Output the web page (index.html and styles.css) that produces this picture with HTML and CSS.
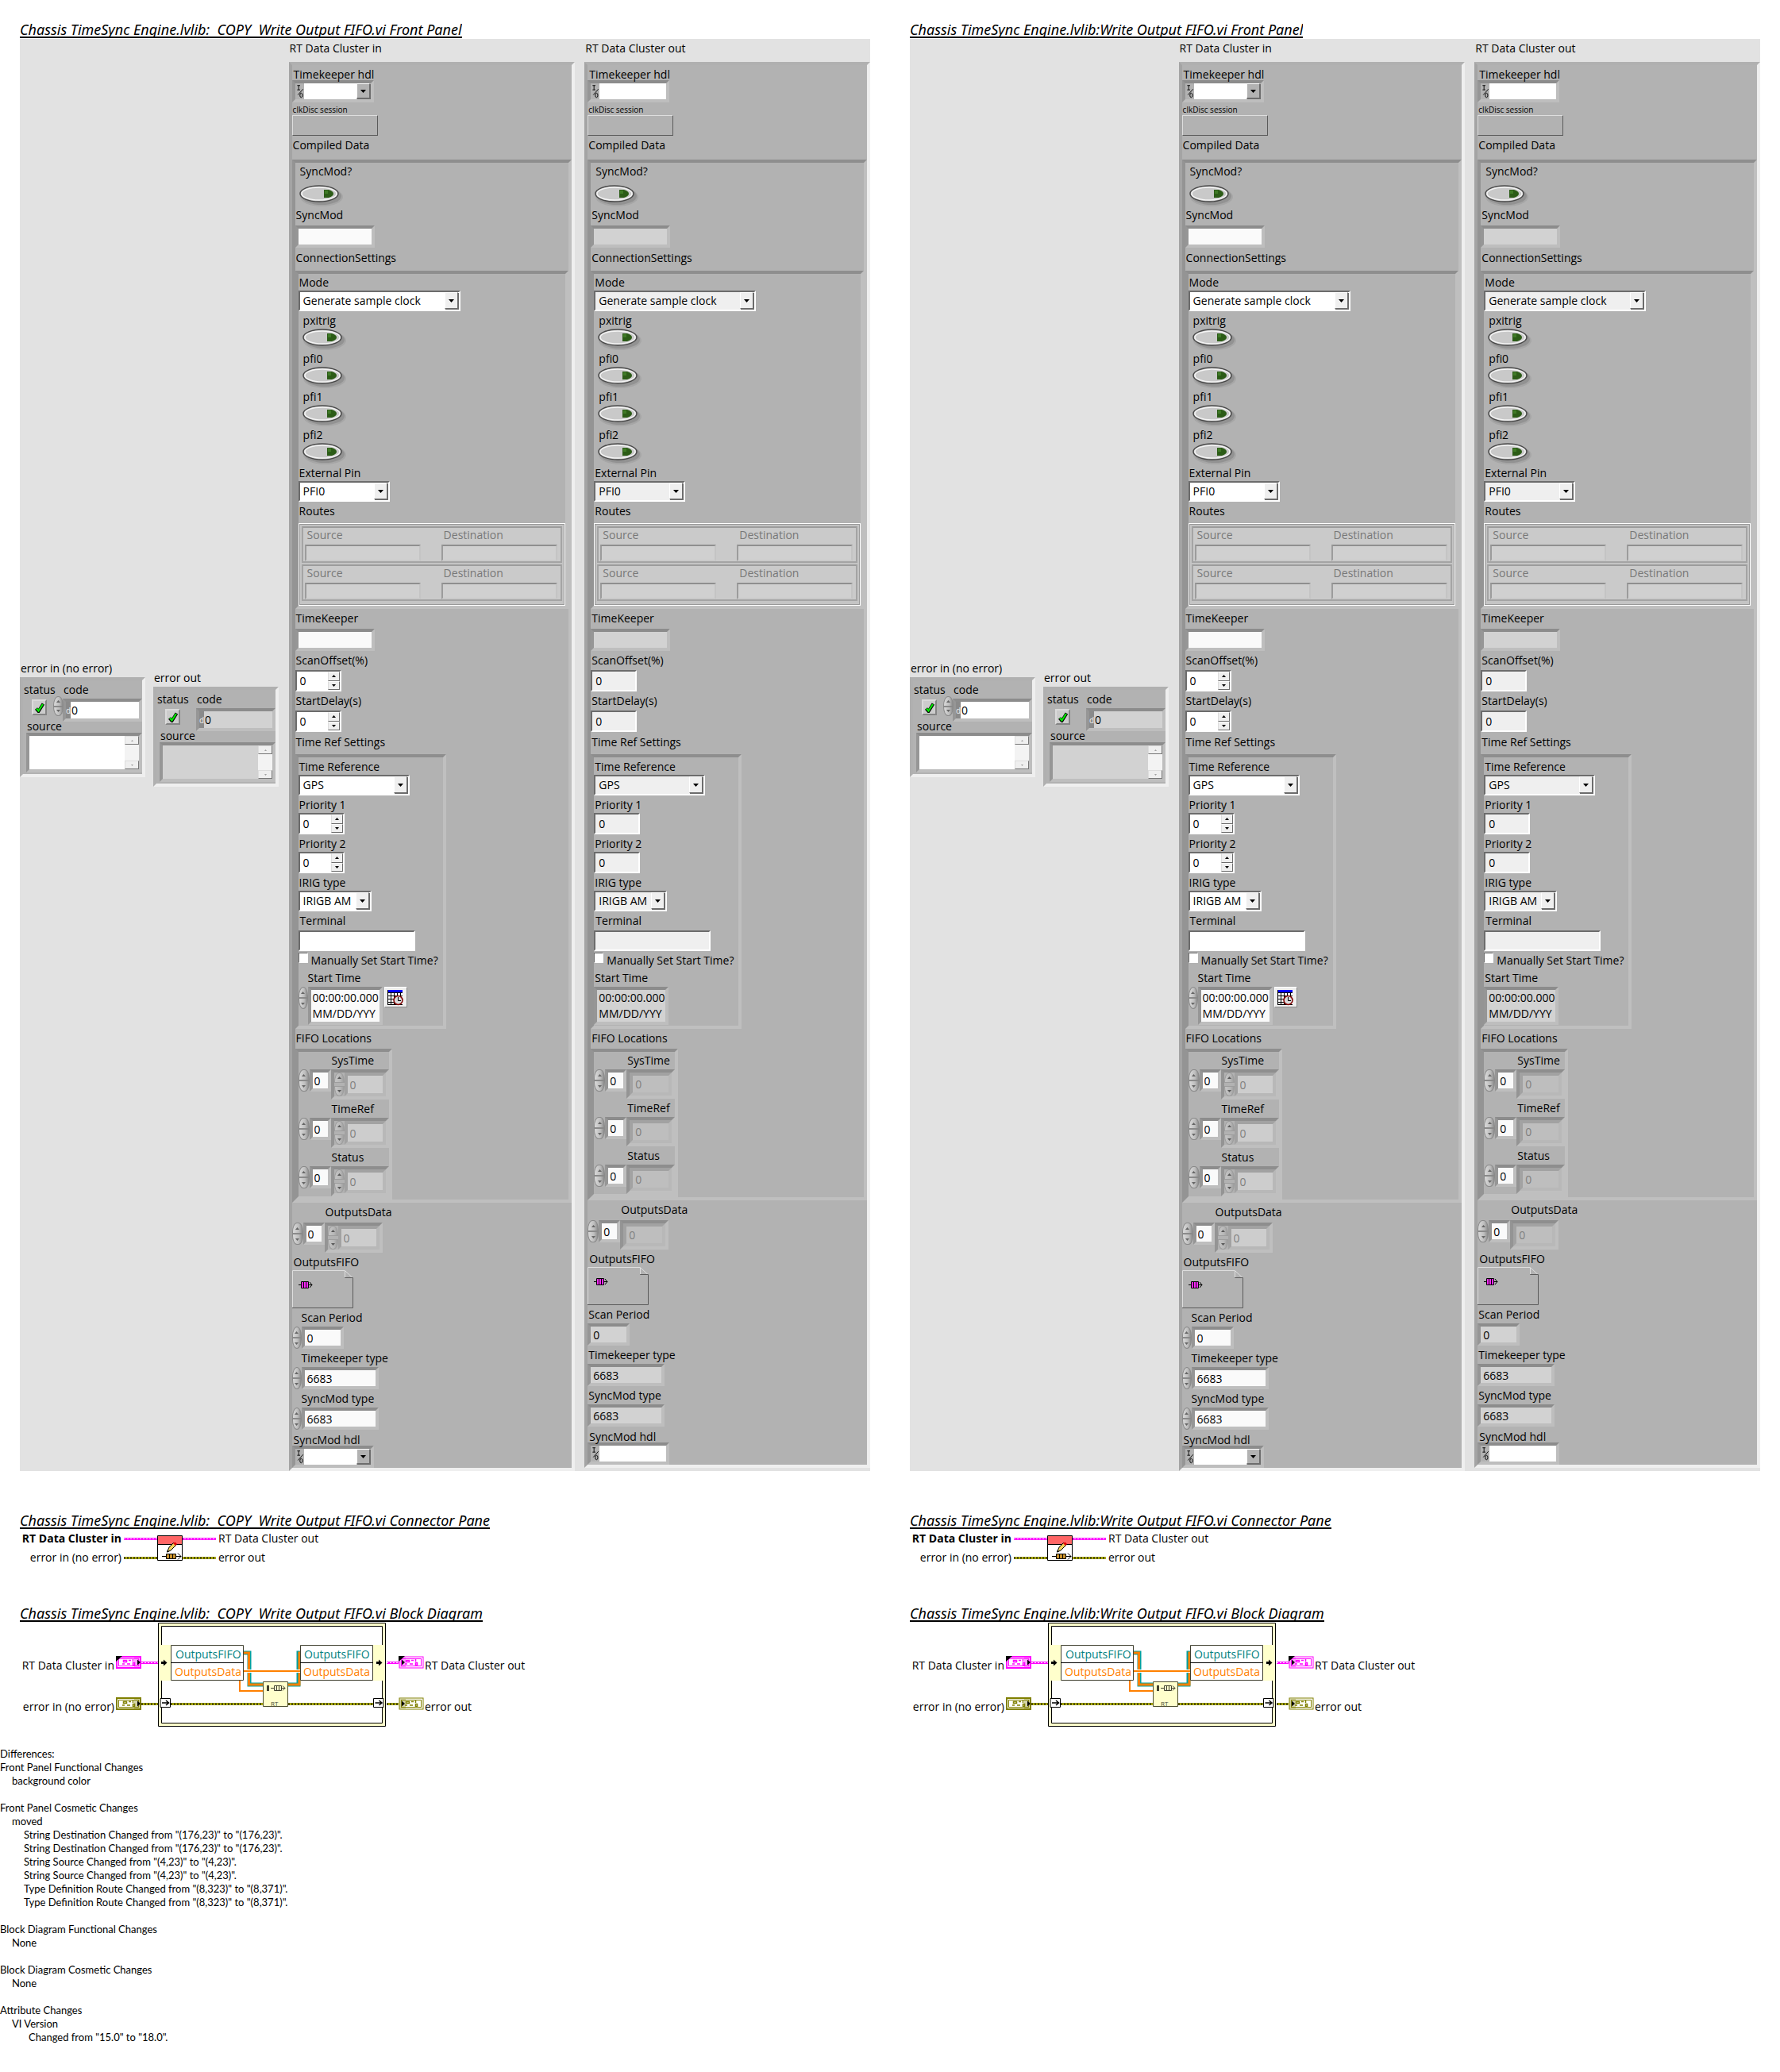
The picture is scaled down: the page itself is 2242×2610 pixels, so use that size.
FILE: index.html
```html
<!DOCTYPE html>
<html lang="en">
<head>
<meta charset="utf-8">
<title>VI Comparison Report</title>
<link rel="stylesheet" href="styles.css">
</head>
<body>
<main class="compare" id="compare"></main>
<section class="differences">
<p>Differences:</p>
<p>Front Panel Functional Changes</p>
<p class="level-1">background color</p>
<p class="group">Front Panel Cosmetic Changes</p>
<p class="level-1">moved</p>
<p class="level-2">String Destination Changed from "(176,23)" to "(176,23)".</p>
<p class="level-2">String Destination Changed from "(176,23)" to "(176,23)".</p>
<p class="level-2">String Source Changed from "(4,23)" to "(4,23)".</p>
<p class="level-2">String Source Changed from "(4,23)" to "(4,23)".</p>
<p class="level-2">Type Definition Route Changed from "(8,323)" to "(8,371)".</p>
<p class="level-2">Type Definition Route Changed from "(8,323)" to "(8,371)".</p>
<p class="group">Block Diagram Functional Changes</p>
<p class="level-1">None</p>
<p class="group">Block Diagram Cosmetic Changes</p>
<p class="level-1">None</p>
<p class="group">Attribute Changes</p>
<p class="level-1">VI Version</p>
<p class="level-3">Changed from "15.0" to "18.0".</p>
</section>
<script src="report.js"></script>
</body>
</html>
```
FILE: report.js
```js
let nextId = 0;
const newId = () => 'c' + (++nextId);

const label = (id, text, cls = '') => `<label class="label ${cls}" for="${id}">${text}</label>`;
const heading = (text, cls = '') => `<div class="label ${cls}">${text}</div>`;

const arrow = (up, cls = 'tri') => `<svg class="${cls}" viewBox="0 0 7 4" aria-hidden="true"><path d="${up ? 'M0 4L3.5 0L7 4Z' : 'M0 0L3.5 4L7 0Z'}"/></svg>`;

const spinner = (cls = '') => `<span class="spinner ${cls}"><button type="button" aria-label="Increment">${arrow(true)}</button><button type="button" aria-label="Decrement">${arrow(false)}</button></span>`;

/* sunken text field, optionally with an oval increment control */
function field(text, size, o = {}) {
  const id = newId();
  return `<div class="item ${o.gap || ''}">${label(id, text, o.spin ? 'indent-12' : '')}
  <div class="row ${o.gap2 || 'gap-1'}">${o.spin ? spinner('narrow') : ''}<input class="sunken ${size}" id="${id}" type="text" value="${o.value || ''}"></div></div>`;
}

/* flat classic numeric */
function numeric(text, out, gap = '') {
  const id = newId();
  return `<div class="item gap-2">${label(id, text)}
  <div class="classic number ${gap}"><input id="${id}" type="text" value="0">${out ? '' : spinner('square')}</div></div>`;
}

function ring(text, value, size, gap = 'gap-2') {
  const id = newId();
  return `<div class="item ${gap}">${label(id, text)}
  <div class="classic combo ${size}"><select id="${id}"><option>${value}</option></select><span class="drop">${arrow(false)}</span></div></div>`;
}

function toggle(text, cls) {
  const id = newId();
  return `<div class="item ${cls}">${label(id, text, 'indent-6')}
  <button class="toggle" type="button" id="${id}"><svg viewBox="0 0 58 28" width="58" height="28" aria-hidden="true">
  <ellipse cx="30" cy="15" rx="27" ry="12" fill="#9a9a9a" opacity=".5"/><ellipse cx="30" cy="14" rx="25" ry="11" fill="#8a8a8a" opacity=".7"/>
  <ellipse cx="27" cy="11" rx="24" ry="10" fill="#c9c9c9" stroke="#4a4a4a" stroke-width="1.5"/><ellipse cx="27" cy="11" rx="22" ry="8" fill="none" stroke="#f4f4f4" stroke-width="1.5"/>
  <path d="M33 6h6q6 2 6 5t-6 5h-6z" fill="#2c5c17"/><path d="M34 7h4v4h-4z" fill="#3f7a26"/></svg></button></div>`;
}

function ioName(text, out, gap) {
  const id = newId();
  return `<div class="item ${gap}">${label(id, text, 'tight indent-2')}
  <div class="sunken io"><svg viewBox="0 0 10 22" width="10" height="20" aria-hidden="true"><path d="M1 3h4M3 3v6M1 9h4M2 16L9 8" stroke="#000" fill="none"/><ellipse cx="6.500" cy="16.500" rx="1.800" ry="3" fill="none" stroke="#000"/></svg>
  <input id="${id}" type="text">${out ? '' : `<span class="drop flat">${arrow(false)}</span>`}</div></div>`;
}

function array(text, out, gap) {
  const a = newId(), b = newId();
  return `<div class="item ${gap}">${label(b, text, 'indent-42')}
  <div class="row array-row">${spinner('oval')}<input class="sunken index" id="${a}" aria-label="${text} index" type="text" value="0">
  <div class="element">${out ? '' : spinner('dim')}<input class="sunken" id="${b}" type="text" value="0" disabled></div></div></div>`;
}

function routes() {
  const cell = () => {
    const a = newId(), b = newId();
    return `<div class="route"><div>${label(a, 'Source')}<input id="${a}" type="text" disabled></div><div>${label(b, 'Destination')}<input id="${b}" type="text" disabled></div></div>`;
  };
  return `<div class="item gap-2">${heading('Routes')}<div class="routes">${cell()}${cell()}</div></div>`;
}

const clockIcon = `<svg viewBox="0 0 22 21" width="22" height="21" aria-hidden="true"><path d="M1 1h19v19H1z" fill="#fff"/><path d="M1 1h19v3H1z" fill="#00f"/><path d="M1 4.500h19M1 8.500h19M1 12.500h19M1 16.500h19M1 19.500h19M1.500 1v19M5.500 4v16M9.500 4v16M13.500 4v16M17.500 4v16" stroke="#000" fill="none"/><circle cx="14.500" cy="14" r="5.500" fill="#ddd" stroke="#800000" stroke-width="1.500"/><path d="M14.500 10v4.500h3.500" stroke="#000" fill="none"/></svg>`;

function startTime(out) {
  const id = newId();
  return `<div class="item gap-2">${label(id, 'Start Time', out ? '' : 'indent-12')}
  <div class="row gap-1">${out ? '' : spinner('narrow')}<textarea class="sunken time" id="${id}" rows="2">00:00:00.000
MM/DD/YYY</textarea>${out ? '' : `<button class="calendar" type="button" aria-label="Pick time">${clockIcon}</button>`}</div></div>`;
}

const refnum = `<svg class="refnum" viewBox="0 0 77 48" width="77" height="48" aria-hidden="true"><path d="M.5 47V.5H66.500L76 9.500" fill="none" stroke="#dedede"/><path d="M66.500 1V9.500H76.500V47.500H0" fill="none" stroke="#5a5a5a"/><path d="M66.500 1V9" stroke="#dedede"/><path d="M8 18.500h17M22 15l3 3.500l-3 3.500" stroke="#000" fill="none"/><path d="M11.500 14.500h9v8h-9z" fill="#ff2bff" stroke="#000"/><path d="M14.500 14v9M17.500 14v9" stroke="#000"/></svg>`;

function dataCluster(dir) {
  const out = dir === 'out';
  const sess = newId(), term = newId(), manual = newId();
  return `<section class="cluster-col ${dir}">
  ${heading('RT Data Cluster ' + dir)}
  <div class="frame outer">
    ${ioName('Timekeeper hdl', out, 'gap-5')}
    <div class="item gap-2">${label(sess, 'clkDisc session', 'small')}<button class="session" type="button" id="${sess}"></button></div>
    ${heading('Compiled Data', 'gap-2')}
    <div class="frame compiled">
      ${toggle('SyncMod?', 'gap-1 spaced')}
      ${field('SyncMod', 'w-100', {gap: 'gap-3', gap2: 'gap-3'})}
      ${heading('ConnectionSettings', 'gap-3')}
      <div class="frame connection">
        ${ring('Mode', 'Generate sample clock', 'w-204', 'gap-1')}
        ${toggle('pxitrig', 'gap-2')}${toggle('pfi0', 'gap-4')}${toggle('pfi1', 'gap-4')}${toggle('pfi2', 'gap-4')}
        ${ring('External Pin', 'PFI0', 'w-115', 'gap-4')}
        ${routes()}
      </div>
      ${field('TimeKeeper', 'w-100', {gap: 'gap-2', gap2: 'gap-3'})}
      ${numeric('ScanOffset(%)', out, 'gap-2')}
      ${numeric('StartDelay(s)', out, 'gap-2')}
      ${heading('Time Ref Settings', 'gap-3')}
      <div class="frame timeref">
        ${ring('Time Reference', 'GPS', 'w-140')}
        ${numeric('Priority 1', out)}
        ${numeric('Priority 2', out)}
        ${ring('IRIG type', 'IRIGB AM', 'w-92')}
        <div class="item gap-2">${label(term, 'Terminal', 'indent-2')}<div class="classic w-147 gap-2"><input id="${term}" type="text"></div></div>
        <div class="check gap-2"><input type="checkbox" id="${manual}">${label(manual, 'Manually Set Start Time?')}</div>
        ${startTime(out)}
      </div>
      ${heading('FIFO Locations', 'gap-2')}
      <div class="frame fifo">
        ${array('SysTime', out, 'gap-1')}${array('TimeRef', out, 'gap-2')}${array('Status', out, 'gap-2')}
      </div>
    </div>
    ${array('OutputsData', out, 'gap-2')}
    <div class="item gap-2">${heading('OutputsFIFO', 'indent-2')}${refnum}</div>
    ${field('Scan Period', 'w-53', {gap: 'gap-2', spin: !out, value: '0'})}
    ${field('Timekeeper type', 'w-97', {gap: 'gap-2', spin: !out, value: '6683'})}
    ${field('SyncMod type', 'w-97', {gap: 'gap-2', spin: !out, value: '6683'})}
    ${ioName('SyncMod hdl', out, 'gap-6')}
  </div></section>`;
}

const tick = `<svg viewBox="0 0 12 13" width="12" height="13"><path d="M1.500 7.500L4.500 11L10.500 1.500" fill="none" stroke="#000" stroke-width="4"/><path d="M2 7.500L4.500 10.500L10 2" fill="none" stroke="#0e0" stroke-width="2.200"/></svg>`;

function errorCluster(name, dir) {
  const s = newId(), c = newId(), t = newId();
  return `<section class="error ${dir}">${heading(name)}
  <div class="frame error-frame">
    <div class="error-top"><div>${label(s, 'status')}<button class="status" type="button" id="${s}">${tick}</button></div>
    <div class="code">${dir === 'in' ? spinner('oval') : ''}${label(c, 'code')}<div class="sunken code-box"><span>d</span><input id="${c}" type="text" value="0"></div></div></div>
    ${label(t, 'source', 'source')}
    <div class="sunken source-box"><textarea id="${t}"></textarea><span class="scroll"><button type="button" aria-label="Up">${arrow(true)}</button><button type="button" aria-label="Down">${arrow(false)}</button></span></div>
  </div></section>`;
}

const wire = (kind, d) => kind === 'data'
  ? `<path class="wire-data" d="${d}"/><path class="wire-data-core" d="${d}"/>`
  : `<path class="wire-error" d="${d}"/><path class="wire-error-yellow" d="${d}"/><path class="wire-error-core" d="${d}"/>`;

const connectorPane = () => `<svg class="drawing" viewBox="0 0 480 44" width="480" height="44">
  <text class="strong" x="128" y="17" text-anchor="end">RT Data Cluster in</text>
  <text x="128" y="41" text-anchor="end">error in (no error)</text>
  <text x="250" y="17">RT Data Cluster out</text><text x="250" y="41">error out</text>
  ${wire('data', 'M131 12.500H247')}${wire('error', 'M131 36.500H247')}
  <path d="M173.500 8.500h31v31h-31z" fill="#fff" stroke="#000"/><path d="M174 9h30v10h-30z" fill="#f66"/><path d="M174 19.500h30" stroke="#000"/>
  <path d="M185.500 29L188 23L193.500 17.500L196.500 20.500L190 27Z" fill="#f2d35c" stroke="#000"/><path d="M193 18L195.500 16.500L198 19L196 21Z" fill="#e00000"/><path d="M185 29.500l1-3l2 2z"/>
  <path d="M179 34.500h24M199 30.500l4 4l-4 4" fill="none" stroke="#000"/><path d="M184.500 31.500h12v6h-12z" fill="#c8922c" stroke="#000"/><path d="M188.500 31v7M192.500 31v7" stroke="#000"/>
</svg>`;

function terminal(x, y, color, right, copy) {
  const tx = right ? x : x + 22;
  return `<g><rect x="${x + 1}" y="${y + 1}" width="30" height="14" fill="#fff" stroke="${color}" stroke-width="${right ? 1 : 2}"/>
  <rect x="${x + 3.5}" y="${y + 3.5}" width="25" height="9" fill="none" stroke="${color}"/><rect x="${tx + 1}" y="${y + 2}" width="8" height="12" fill="${color}" opacity=".35"/>
  <path d="M${x + 9.5} ${y + 5.5}h4v2h-4zM${x + 16} ${y + 5.5}h3M${x + 21.5} ${y + 4}v3M${x + 8} ${y + 10}h3M${x + 14} ${y + 10}h4M${x + 21.5} ${y + 8.5}h2v3h-2z" fill="none" stroke="${color}" stroke-width="1.500"/>
  <path d="M${right ? x + 4 : x + 27} ${y + 4.5}l4 3.500l-4 3.500z"/>${copy ? `<path d="M${x} ${y}h8l-8 7z"/>` : ''}</g>`;
}

const node = (x, tx) => `<path d="M${x}.5 29.500h91v44h-91z" fill="#fff" stroke="#404030"/><path d="M${x} 51.500h92" stroke="#000"/>
  <text x="${tx}" y="46" fill="#008080">OutputsFIFO</text><text x="${tx - 1}" y="68" fill="#ff8000">OutputsData</text>`;

const smallArrow = x => `<path d="M${x} 50h3v-2.500l4.500 4l-4.500 4v-2.500h-3z"/>`;
const tunnel = (x, y) => `<path d="M${x} ${y}h12.500v11h-12.500z" fill="#fff" stroke="#000"/><path d="M${x + 2} ${y + 5.5}h9M${x + 7} ${y + 2.5}l3.500 3l-3.500 3" fill="none" stroke="#000" stroke-width="1.500"/>`;

const blockDiagram = () => `<svg class="drawing" viewBox="0 0 660 133" width="660" height="133">
  <path d="M174.500 1.500h286v130h-286z" fill="#ffc" stroke="#000"/><path d="M178.500 5.500h278v122h-278z" fill="#fff" stroke="#000"/>
  <path d="M175 29h16v45h-16zM445 29h15v45h-15z" fill="#ffc"/>
  <path d="M282 39H289V79H306M338 79H351V39H354" fill="none" stroke="#00a0a0" stroke-width="5"/><path d="M282 39H288.500V79H306M338 79H352V39H354" fill="none" stroke="#ff8000" stroke-width="3"/>
  <path d="M282 62H353" stroke="#fff" stroke-width="4"/><path d="M282 62H353M277 74V87H306" fill="none" stroke="#ff8000" stroke-width="2"/>
  ${node(190, 196)}${node(353, 358)}${smallArrow(178)}${smallArrow(449)}
  ${wire('data', 'M153 51.500H174')}${wire('data', 'M462 51.500H477')}
  ${wire('error', 'M153 103.500H174')}${wire('error', 'M190 103.500H445')}${wire('error', 'M462 103.500H477')}
  ${tunnel(177, 96.5)}${tunnel(445.5, 96.5)}
  <path d="M306.500 75.500h31v31h-31z" fill="#ffc" stroke="#4f4f30"/><path d="M311 80h3v7h-3z" fill="#404030"/><path d="M316 83.500h18M331 80.500l3 3l-3 3" fill="none" stroke="#404030"/><path d="M320.500 80.500h9v6h-9z" fill="#ffc" stroke="#404030"/><path d="M323.500 80v7M326.500 80v7" stroke="#404030"/>
  <text class="tiny" x="316" y="106" fill="#404030">RT</text>
  ${terminal(121, 43, '#ff00ff', false, true)}${terminal(121, 95, '#808000', false)}${terminal(477, 43, '#ff00ff', true, true)}${terminal(477, 95, '#808000', true)}
  <text x="119" y="60" text-anchor="end">RT Data Cluster in</text><text x="119" y="112" text-anchor="end">error in (no error)</text>
  <text x="510" y="60">RT Data Cluster out</text><text x="510" y="112">error out</text>
</svg>`;

const viReport = name => `<article class="vi">
  <h2>${name} Front Panel</h2>
  <div class="panel"><div class="errors">${errorCluster('error in (no error)', 'in')}${errorCluster('error out', 'out')}</div>${dataCluster('in')}${dataCluster('out')}</div>
  <h2>${name} Connector Pane</h2>${connectorPane()}
  <h2>${name} Block Diagram</h2>${blockDiagram()}
</article>`;

document.getElementById('compare').innerHTML =
  viReport('Chassis TimeSync Engine.lvlib:  COPY  Write Output FIFO.vi') +
  viReport('Chassis TimeSync Engine.lvlib:Write Output FIFO.vi');
```
FILE: styles.css
```css
* { box-sizing: border-box; }
body { margin: 0; background: #fff; color: #000; font: 14px/20px "Open Sans", "Noto Sans", sans-serif; }
button, input, select, textarea { font: inherit; color: inherit; margin: 0; padding: 0; border: 0; border-radius: 0; background: none; appearance: none; min-width: 0; }
p, h2 { margin: 0; }
svg { display: block; flex: none; }

.compare { display: grid; grid-template-columns: 1fr 1fr; padding-top: 25px; }
.vi { padding: 0 25px; }
h2 { display: block; width: fit-content; height: 23px; overflow: hidden; border-bottom: 2px solid #000; font: italic 18px/25px "Noto Sans", "Open Sans", sans-serif; white-space: pre; }
h2:not(:first-child) { margin-top: 50px; }

.panel { display: grid; grid-template-columns: 326fr 360fr 359fr; gap: 13px 12px; margin-top: 1px; background: #e2e2e2; align-items: start; }
.label { display: block; height: 20px; line-height: 20px; padding-left: 1px; white-space: nowrap; width: fit-content; }
.label.tight { height: 14px; line-height: 14px; }
.label.small { height: 14px; font-size: 10px; line-height: 14px; }
.label.indent-2 { padding-left: 2px; }
.label.indent-6 { padding-left: 6px; }
.label.indent-12 { padding-left: 12px; }
.label.indent-42 { padding-left: 42px; }
.gap-1 { margin-top: 1px; }
.gap-2 { margin-top: 2px; }
.gap-3 { margin-top: 3px; }
.gap-4 { margin-top: 4px; }
.gap-5 { margin-top: 5px; }
.gap-6 { margin-top: 6px; }
.row { display: flex; align-items: flex-start; }

.frame { display: flow-root; border: 4px solid; border-color: #8e8e8e #bfbfbf #bfbfbf #949494; background: #b2b2b2; }
.frame.outer { margin-top: 7px; border-color: #b0b0b0 #efefef #efefef #a4a4a4; }
.frame.compiled { margin-top: 8px; }
.frame.connection { margin-top: 6px; }
.frame.timeref { margin-top: 5px; width: 190px; padding-bottom: 1px; }
.frame.fifo { margin-top: 3px; width: 122px; }
.out .frame.fifo { width: 110px; }
.cluster-col { padding-top: 2px; }

.sunken { border: 4px solid; border-color: #8c8c8c #bebebe #bebebe #969696; background: #fafafa; height: 28px; }
.out .sunken { background: #d2d2d2; }
input.sunken { padding-left: 3px; }
.w-53 { width: 53px; }
.w-92 { width: 92px; }
.w-97 { width: 97px; }
.w-100 { width: 100px; }
.w-115 { width: 115px; }
.w-140 { width: 140px; }
.w-147 { width: 147px; }
.w-204 { width: 204px; }

.io, .out .io { display: flex; width: 103px; background: #b2b2b2; padding-left: 1px; }
.io input { flex: 1; width: 0; background: #fff; }
.session { display: block; width: 108px; height: 26px; border: 1px solid; border-color: #dedede #5a5a5a #5a5a5a #dedede; }
.toggle { display: block; width: 58px; height: 24px; margin-left: 3px; }
.spaced .toggle { margin: 7px 0 4px 3px; }

.classic { display: flex; height: 26px; background: #fff; border: 2px solid; border-color: #6c6c6c #fff #fff #6c6c6c; }
.out .classic { background: #efefef; }
.classic input, .classic select { flex: 1; width: 0; padding-left: 4px; }
.classic.number { width: 58px; height: 27px; }
.drop { display: grid; place-items: center; width: 17px; background: #efefef; border: 1px solid; border-color: #fff #6c6c6c #6c6c6c #fff; box-shadow: 1px 1px #6c6c6c; margin: 0 1px 1px 0; }
.drop.flat { background: #b2b2b2; }
.drop .tri { width: 7px; height: 4px; }

.spinner { display: flex; flex-direction: column; flex: none; }
.spinner button { display: grid; place-items: center; flex: 1; }
.spinner .tri { width: 5px; height: 3px; }
.spinner.square { width: 15px; }
.spinner.square button { background: #efefef; border: 1px solid; border-color: #fff #6c6c6c #6c6c6c #ddd; }
.oval, .narrow, .dim { width: 13px; height: 28px; }
.narrow { width: 12px; }
.oval button, .narrow button, .dim button { border: 1px solid #8a8a8a; background: linear-gradient(90deg, #dadada, #bdbdbd 60%, #8a8a8a); border-radius: 6px 6px 0 0 / 12px 12px 0 0; }
.oval button:last-child, .narrow button:last-child, .dim button:last-child { border-radius: 0 0 6px 6px / 0 0 12px 12px; }
.oval .tri, .narrow .tri { fill: #666; }
.dim { height: 30px; gap: 4px; opacity: .5; }

.array-row { margin-top: 1px; height: 38px; }
.out .array-row { height: 37px; }
.array-row .oval { width: 14px; }
.outer > .item > .array-row { margin-top: 3px; }
.index, .out .index { width: 27px; background: #fafafa; }
input.index { padding-left: 2px; }
.element { display: flex; width: 73px; height: 100%; border: 4px solid; border-color: #8e8e8e #bfbfbf #bfbfbf #949494; background: #b2b2b2; }
.out .element { width: 61px; }
.element .sunken { flex: 1; width: 0; height: 30px; background: #cdcdcd; color: #808080; border-color: #a2a2a2 #b8b8b8 #b8b8b8 #a2a2a2; }
.out .element .sunken { background: #bebebe; height: 29px; }

.routes { display: grid; grid-auto-rows: 46px; gap: 2px; height: 104px; margin-top: 5px; padding: 3px; border: 1px solid #fff; outline: 1px solid #999; outline-offset: -2px; background: #c4c4c4; }
.route { display: grid; grid-template-columns: 172px 1fr; align-content: start; border: 2px solid; border-color: #9c9c9c #a4a4a4 #a4a4a4 #a4a4a4; background: #cacaca; color: #787878; padding-left: 2px; }
.route .label { padding-left: 3px; height: 21px; line-height: 18px; }
.route input { display: block; width: 146px; height: 21px; background: #d0d0d0; border: 2px solid; border-color: #8f8f8f #c4c4c4 #cacaca #9c9c9c; }

.check { display: flex; gap: 3px; height: 20px; }
.check input { width: 12px; height: 13px; background: #fff; border: 1px solid; border-color: #6c6c6c #fff #fff #6c6c6c; }
.time { width: 94px; height: 48px; resize: none; overflow: hidden; padding-left: 2px; white-space: pre; }
.calendar { display: grid; place-items: center; width: 29px; height: 26px; margin-left: 2px; background: #efefef; border: 1px solid; border-color: #fff #8a8a8a #8a8a8a #fff; }

.errors { display: flex; gap: 10px; }
.error { width: 158px; margin-top: 783px; }
.error.out { margin-top: 795px; }
.error-frame { height: 126px; margin-top: 1px; border-color: #b0b0b0 #efefef #efefef #b0b0b0; }
.error-top { display: grid; grid-template-columns: 50px 1fr; margin-top: 2px; }
.error-top .code { position: relative; }
.code .oval { position: absolute; left: -12px; top: 18px; height: 25px; }
.status { display: grid; place-items: center; width: 19px; height: 20px; margin: 2px 0 0 11px; background: #ccc; border: 2px solid; border-color: #dadada #858585 #858585 #dadada; }
.code-box { display: flex; height: 29px; margin-top: 1px; }
.code-box span { width: 6px; background: #8a8a8a; color: #eee; font-size: 10px; line-height: 22px; }
.code-box input { flex: 1; width: 0; background: #fff; padding-left: 1px; }
.out .code-box input { background: #d2d2d2; }
.label.source { height: 14px; line-height: 11px; padding-left: 5px; }
.source-box { display: flex; height: 50px; margin-left: 4px; background: #fff; }
.source-box textarea { flex: 1; width: 0; resize: none; height: 42px; overflow: hidden; }
.scroll { display: flex; flex-direction: column; justify-content: space-between; width: 18px; background: #f3f3f3; }
.scroll button { display: grid; place-items: center; height: 11px; background: #efefef; border: 1px solid; border-color: #ddd #777 #777 #ddd; }
.scroll .tri { width: 3px; height: 2px; fill: #888; }

.drawing { max-width: 100%; font-size: 14px; }
.drawing .strong { font-weight: 700; }
.drawing .tiny { font-size: 8px; }
.wire-data { stroke: #f0f; stroke-width: 3; }
.wire-data-core { stroke: #fff; stroke-dasharray: 2 2; }
.wire-error { stroke: #808000; stroke-width: 3; }
.wire-error-yellow { stroke: #ff0; }
.wire-error-core { stroke: #000; stroke-dasharray: 2 2; }

.differences { margin-top: 25px; padding-bottom: 33px; font: 13px/17px Lato, sans-serif; }
.group { margin-top: 17px; }
.level-1 { padding-left: 15px; }
.level-2 { padding-left: 30px; }
.level-3 { padding-left: 36px; }
```
